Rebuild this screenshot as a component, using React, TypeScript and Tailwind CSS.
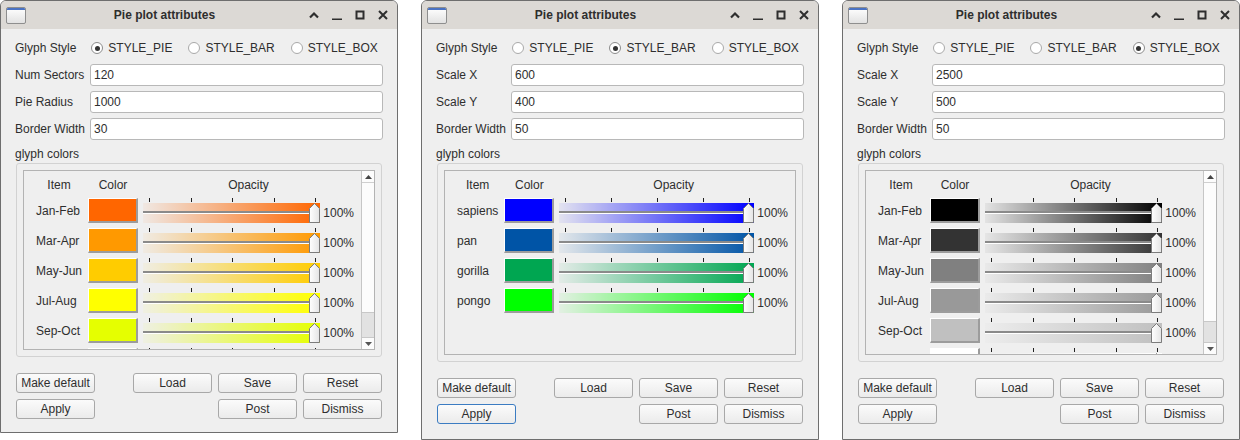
import React from "react";

type Item = { label: string; color: string; hidden?: boolean };

type WinProps = {
  selected: 0 | 1 | 2;
  fields: [string, string][];
  items: Item[];
  scroll: boolean;
  thumbH: number;
  tall: boolean;
  applyFocus?: boolean;
};

const rgba = (hex: string, a: number) => {
  const h = hex.replace("#", "");
  const r = parseInt(h.slice(0, 2), 16);
  const g = parseInt(h.slice(2, 4), 16);
  const b = parseInt(h.slice(4, 6), 16);
  return `rgba(${r},${g},${b},${a})`;
};

function WindowIcon() {
  return (
    <div className="w-[20px] h-[17px] rounded-[2px] border border-[#8e8e8e] bg-linear-to-b from-[#ffffff] to-[#e2e2e2] overflow-hidden">
      <div className="h-[2px] bg-[#4a73c4]" />
    </div>
  );
}

function TitleBar() {
  return (
    <div className="h-[28px] bg-[#dcd9d5] flex items-center shrink-0">
      <div className="w-[30px] pl-[5px] flex items-center">
        <WindowIcon />
      </div>
      <div className="flex-1 text-center font-bold text-[12px] text-[#2e2e2e] pr-[11px]">
        Pie plot attributes
      </div>
      <div className="flex items-center gap-[13px] pr-[9px] text-[#2e2e2e]">
        <svg width="10" height="10" viewBox="0 0 10 10">
          <polyline points="1,7.5 5,3.5 9,7.5" fill="none" stroke="#2e2e2e" strokeWidth="2.2" />
        </svg>
        <svg width="10" height="10" viewBox="0 0 10 10">
          <rect x="0" y="8.5" width="10" height="2" fill="#2e2e2e" />
        </svg>
        <svg width="10" height="10" viewBox="0 0 10 10">
          <rect x="1.5" y="1.5" width="7" height="7" fill="none" stroke="#2e2e2e" strokeWidth="2" />
        </svg>
        <svg width="10" height="10" viewBox="0 0 10 10">
          <path d="M1 1 L9 9 M9 1 L1 9" stroke="#2e2e2e" strokeWidth="2" />
        </svg>
      </div>
    </div>
  );
}

function Radio({ checked, label, first }: { checked: boolean; label: string; first?: boolean }) {
  return (
    <div className={first ? "flex items-center ml-[15px]" : "flex items-center ml-[16px]"}>
      <div
        className={
          checked
            ? "w-[12px] h-[12px] rounded-full border border-[#8c8c8c] bg-white flex items-center justify-center"
            : "w-[12px] h-[12px] rounded-full border border-[#a9a9a9] bg-white flex items-center justify-center"
        }
      >
        {checked && <div className="w-[5px] h-[5px] rounded-full bg-[#333333]" />}
      </div>
      <span className="ml-[5px]">{label}</span>
    </div>
  );
}

function Slider({ color }: { color: string }) {
  return (
    <div className="h-[30px] ml-[5px] mr-[3px] flex flex-col min-w-0">
      <div className="h-[5px] flex justify-between pl-[6px] pr-[4px]">
        {[0, 1, 2, 3, 4].map((i) => (
          <div key={i} className="w-px h-[4px] bg-[#222222]" />
        ))}
      </div>
      <div
        className="relative h-[20px]"
        style={{ background: `linear-gradient(to right, ${rgba(color, 0.05)}, ${color})` }}
      >
        <div className="absolute left-0 right-[6px] top-[8px] h-[2px] bg-[#8a8a8a]" />
        <div className="absolute left-0 right-[6px] top-[10px] h-px bg-white" />
        <svg className="absolute right-0 top-0" width="11" height="20" viewBox="0 0 11 20">
          <defs>
            <linearGradient id="hg" x1="0" y1="0" x2="1" y2="0">
              <stop offset="0" stopColor="#ffffff" />
              <stop offset="1" stopColor="#e4e4e4" />
            </linearGradient>
          </defs>
          <path d="M0.5 5.5 L5.5 0.5 L10.5 5.5 L10.5 19.5 L0.5 19.5 Z" fill="url(#hg)" stroke="#7c7c7c" strokeWidth="1" />
        </svg>
      </div>
    </div>
  );
}

function Btn({ label, focus }: { label: string; focus?: boolean }) {
  return (
    <div
      className={
        focus
          ? "w-[79px] h-[20px] rounded-[3px] border border-[#3b7cc2] bg-linear-to-b from-[#fbfbfb] to-[#ebebeb] flex items-center justify-center"
          : "w-[79px] h-[20px] rounded-[3px] border border-[#a8a8a8] bg-linear-to-b from-[#fbfbfb] to-[#ebebeb] flex items-center justify-center"
      }
    >
      {label}
    </div>
  );
}

function Win({ selected, fields, items, scroll, thumbH, tall, applyFocus }: WinProps) {
  return (
    <div
      className={
        tall
          ? "w-[398px] h-[440px] shrink-0 border border-[#6e6e6e] rounded-t-[6px] bg-[#efefef] flex flex-col overflow-hidden"
          : "w-[398px] h-[433px] shrink-0 border border-[#6e6e6e] rounded-t-[6px] bg-[#efefef] flex flex-col overflow-hidden"
      }
    >
      <TitleBar />
      <div className="flex flex-col px-[14px] pt-[8px]">
        <div className="h-[22px] flex items-center">
          <span>Glyph Style</span>
          <Radio first checked={selected === 0} label="STYLE_PIE" />
          <Radio checked={selected === 1} label="STYLE_BAR" />
          <Radio checked={selected === 2} label="STYLE_BOX" />
        </div>
        {fields.map(([k, v]) => (
          <div key={k} className="grid grid-cols-[75px_1fr] mt-[5px] h-[22px] items-center">
            <span>{k}</span>
            <div className="h-[22px] border border-[#b8b8b8] rounded-[3px] bg-white pl-[3px] flex items-center">
              {v}
            </div>
          </div>
        ))}
        <div className="mt-[4px] h-[19px] flex items-center">glyph colors</div>
        <div className="mx-[1px] border border-[#d2d2d2] rounded-[3px] p-[6px]">
          <div
            className={
              tall
                ? "h-[185px] border border-[#b3b3b3] flex overflow-hidden"
                : "h-[180px] border border-[#b3b3b3] flex overflow-hidden"
            }
          >
            <div className="flex-1 min-w-0 overflow-hidden">
              <div className="grid grid-cols-[auto_50px_1fr_auto] pl-[12px] pr-[7px] content-start">
                <div className="h-[27px] pr-[6px] flex items-center justify-center">Item</div>
                <div className="h-[27px] flex items-center justify-center">Color</div>
                <div className="h-[27px] col-span-2 pl-[5px] flex items-center justify-center">Opacity</div>
                {items.map((it, idx) => (
                  <React.Fragment key={idx}>
                    <div className="h-[30px] pb-[5px] pr-[6px] flex items-center">{it.hidden ? "" : it.label}</div>
                    <div className="h-[30px]">
                      <div
                        className="h-[25px] border-t border-l border-r-2 border-b-2 border-t-white border-l-white border-r-[#9c9c9c] border-b-[#9c9c9c]"
                        style={{ backgroundColor: it.color }}
                      />
                    </div>
                    <Slider color={it.color} />
                    <div className="h-[30px] pt-[5px] pb-[5px] flex items-center">{it.hidden ? "" : "100%"}</div>
                  </React.Fragment>
                ))}
              </div>
            </div>
            {scroll && (
              <div className="w-[13px] shrink-0 flex flex-col bg-[#fcfcfc] border-l border-[#c6c6c6]">
                <div className="h-[12px] border-b border-[#cfcfcf] flex items-center justify-center">
                  <svg width="7" height="4" viewBox="0 0 7 4">
                    <path d="M0 4 L3.5 0 L7 4 Z" fill="#444444" />
                  </svg>
                </div>
                <div className="flex-1 flex flex-col justify-end">
                  <div
                    className={
                      thumbH === 25
                        ? "h-[25px] bg-[#e2e2e2] border-t border-[#c8c8c8]"
                        : "h-[21px] bg-[#e2e2e2] border-t border-[#c8c8c8]"
                    }
                  />
                </div>
                <div className="h-[12px] border-t border-[#c8c8c8] flex items-center justify-center">
                  <svg width="7" height="4" viewBox="0 0 7 4">
                    <path d="M0 0 L3.5 4 L7 0 Z" fill="#555555" />
                  </svg>
                </div>
              </div>
            )}
          </div>
        </div>
        <div className="mx-[1px] mt-[16px] flex">
          <Btn label="Make default" />
          <div className="ml-auto flex gap-[6px]">
            <Btn label="Load" />
            <Btn label="Save" />
            <Btn label="Reset" />
          </div>
        </div>
        <div className="mx-[1px] mt-[6px] flex">
          <Btn label="Apply" focus={applyFocus} />
          <div className="ml-auto flex gap-[6px]">
            <Btn label="Post" />
            <Btn label="Dismiss" />
          </div>
        </div>
      </div>
    </div>
  );
}

export default function App() {
  const pie: Item[] = [
    { label: "Jan-Feb", color: "#ff6600" },
    { label: "Mar-Apr", color: "#ff9900" },
    { label: "May-Jun", color: "#ffcc00" },
    { label: "Jul-Aug", color: "#ffff00" },
    { label: "Sep-Oct", color: "#e5ff00" },
    { label: "Nov-Dec", color: "#ccff00", hidden: true },
  ];
  const apes: Item[] = [
    { label: "sapiens", color: "#0000ff" },
    { label: "pan", color: "#0054a6" },
    { label: "gorilla", color: "#00a651" },
    { label: "pongo", color: "#00ff00" },
  ];
  const grays: Item[] = [
    { label: "Jan-Feb", color: "#000000" },
    { label: "Mar-Apr", color: "#333333" },
    { label: "May-Jun", color: "#808080" },
    { label: "Jul-Aug", color: "#999999" },
    { label: "Sep-Oct", color: "#c0c0c0" },
    { label: "Nov-Dec", color: "#ffffff", hidden: true },
  ];
  return (
    <div className="w-[1240px] h-[440px] bg-white flex items-start gap-[23px] overflow-hidden font-['Liberation_Sans',Arial,sans-serif] text-[12px] text-[#2e2e2e]">
      <Win
        selected={0}
        fields={[
          ["Num Sectors", "120"],
          ["Pie Radius", "1000"],
          ["Border Width", "30"],
        ]}
        items={pie}
        scroll
        thumbH={25}
        tall={false}
      />
      <Win
        selected={1}
        fields={[
          ["Scale X", "600"],
          ["Scale Y", "400"],
          ["Border Width", "50"],
        ]}
        items={apes}
        scroll={false}
        thumbH={0}
        tall
        applyFocus
      />
      <Win
        selected={2}
        fields={[
          ["Scale X", "2500"],
          ["Scale Y", "500"],
          ["Border Width", "50"],
        ]}
        items={grays}
        scroll
        thumbH={21}
        tall
      />
    </div>
  );
}
